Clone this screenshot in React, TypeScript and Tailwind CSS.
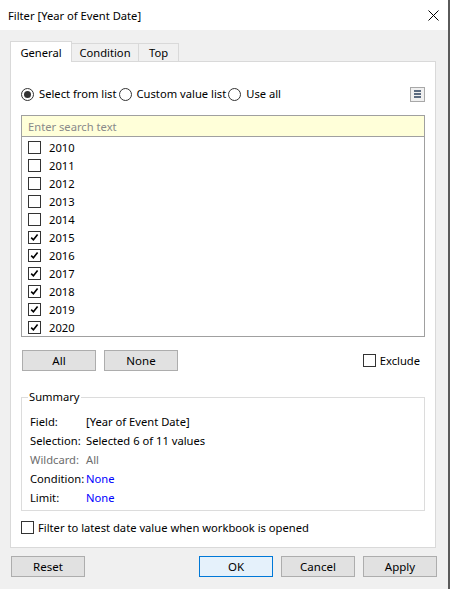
import { useState } from 'react';

const years = [2010, 2011, 2012, 2013, 2014, 2015, 2016, 2017, 2018, 2019, 2020];

function CheckBox({ checked }: { checked: boolean }) {
    return (
        <span className="flex h-[13px] w-[13px] shrink-0 items-center justify-center border border-[#333333] bg-white">
            {checked && (
                <svg width="11" height="11" viewBox="0 0 11 11">
                    <path d="M2.2 5.6 L4.4 7.8 L8.6 2.4" fill="none" stroke="#000" strokeWidth="1.6" />
                </svg>
            )}
        </span>
    );
}

function Radio({ checked }: { checked: boolean }) {
    return (
        <span className="flex h-[13px] w-[13px] shrink-0 items-center justify-center rounded-full border border-[#333333] bg-white">
            {checked && <span className="h-[7px] w-[7px] rounded-full bg-[#333333]" />}
        </span>
    );
}

function Btn({ label, primary }: { label: string; primary?: boolean }) {
    return (
        <button
            type="button"
            className={
                primary
                    ? 'h-[21px] w-[74px] border border-[#0078d7] bg-[#e5f1fb] text-[11.5px] text-black'
                    : 'h-[21px] w-[74px] border border-[#adadad] bg-[#e1e1e1] text-[11.5px] text-black'
            }
        >
            {label}
        </button>
    );
}

export default function App() {
    const [selected] = useState(years.map((y) => y >= 2015));

    const summary = [
        { k: 'Field:', v: '[Year of Event Date]', kc: 'text-black', vc: 'text-black' },
        { k: 'Selection:', v: 'Selected 6 of 11 values', kc: 'text-black', vc: 'text-black' },
        { k: 'Wildcard:', v: 'All', kc: 'text-[#6d6d6d]', vc: 'text-[#6d6d6d]' },
        { k: 'Condition:', v: 'None', kc: 'text-black', vc: 'text-[#0000ff]' },
        { k: 'Limit:', v: 'None', kc: 'text-black', vc: 'text-[#0000ff]' },
    ];

    return (
        <div className="flex h-[589px] w-[450px] flex-col border-r-2 border-[#5a5a5a] bg-[#f0f0f0] font-['Segoe_UI','Noto_Sans',sans-serif] text-[11.2px] leading-[14px] text-black">
            {/* title bar */}
            <div className="flex h-[30px] items-center justify-between bg-white pl-[8px] pr-[9px]">
                <span className="pt-px text-[11.2px]">Filter [Year of Event Date]</span>
                <svg width="11" height="11" viewBox="0 0 11 11">
                    <path d="M0.5 0.5 L10.5 10.5 M10.5 0.5 L0.5 10.5" stroke="#000" strokeWidth="1" />
                </svg>
            </div>

            <div className="flex flex-col pl-[10px] pr-[12px] pt-[11px]">
                {/* tabs */}
                <div className="flex h-[20px] items-end">
                    <div className="relative z-10 -mb-px flex h-[21px] w-[62px] justify-center border border-b-0 border-[#d9d9d9] bg-white pt-[4px]">
                        General
                    </div>
                    <div className="flex h-[18px] w-[67px] justify-center border border-b-0 border-l-0 border-[#d9d9d9] bg-[#f0f0f0] pt-[2px]">
                        Condition
                    </div>
                    <div className="flex h-[18px] w-[40px] justify-center border border-b-0 border-l-0 border-[#d9d9d9] bg-[#f0f0f0] pt-[2px]">
                        Top
                    </div>
                </div>

                {/* panel */}
                <div className="flex h-[487px] flex-col border border-[#d9d9d9] bg-white px-[10px]">
                    <div className="mt-[24px] flex h-[16px] items-center">
                        <Radio checked />
                        <span className="ml-[5px] mr-[2px]">Select from list</span>
                        <Radio checked={false} />
                        <span className="ml-[5px] mr-[2px]">Custom value list</span>
                        <Radio checked={false} />
                        <span className="ml-[5px]">Use all</span>
                        <div className="ml-auto flex h-[15px] w-[15px] flex-col items-center justify-center gap-[1px] border border-[#a8a8a8] bg-[#f0f0f0]">
                            <span className="h-[2px] w-[7px] bg-[#5b6b80]" />
                            <span className="h-[2px] w-[7px] bg-[#5b6b80]" />
                            <span className="h-[2px] w-[7px] bg-[#5b6b80]" />
                        </div>
                    </div>

                    {/* list */}
                    <div className="mt-[13px] flex h-[222px] flex-col border border-[#a0a0a0]">
                        <div className="flex h-[21px] items-center border-b border-[#a0a0a0] bg-[#ffffd9] pl-[6px] pt-px text-[#8a8a8a]">
                            Enter search text
                        </div>
                        <div className="flex flex-col pt-px">
                            {years.map((y, i) => (
                                <div key={y} className="flex h-[18px] items-center pl-[6px]">
                                    <CheckBox checked={selected[i]} />
                                    <span className="ml-[8px] pt-[2px]">{y}</span>
                                </div>
                            ))}
                        </div>
                    </div>

                    <div className="mt-[13px] flex items-center pl-px">
                        <Btn label="All" />
                        <div className="ml-[8px]">
                            <Btn label="None" />
                        </div>
                        <div className="ml-auto mr-[5px] flex items-center">
                            <CheckBox checked={false} />
                            <span className="ml-[4px] pt-px">Exclude</span>
                        </div>
                    </div>

                    {/* summary */}
                    <fieldset className="mt-[19px] border border-[#dcdcdc] pb-[3px] pt-[8px]">
                        <legend className="ml-[6px] px-px leading-[14px]">Summary</legend>
                        {summary.map((r) => (
                            <div key={r.k} className="flex h-[19px] items-center pl-[8px] pt-px">
                                <span className={`w-[56px] ${r.kc}`}>{r.k}</span>
                                <span className={r.vc}>{r.v}</span>
                            </div>
                        ))}
                    </fieldset>

                    <div className="mt-[9px] flex items-center">
                        <CheckBox checked={false} />
                        <span className="ml-[4px] pt-px">Filter to latest date value when workbook is opened</span>
                    </div>
                </div>

                {/* footer buttons */}
                <div className="mr-[-1px] mt-[8px] flex items-center pl-px">
                    <Btn label="Reset" />
                    <div className="ml-auto flex gap-[8px]">
                        <Btn label="OK" primary />
                        <Btn label="Cancel" />
                        <Btn label="Apply" />
                    </div>
                </div>
            </div>
        </div>
    );
}
